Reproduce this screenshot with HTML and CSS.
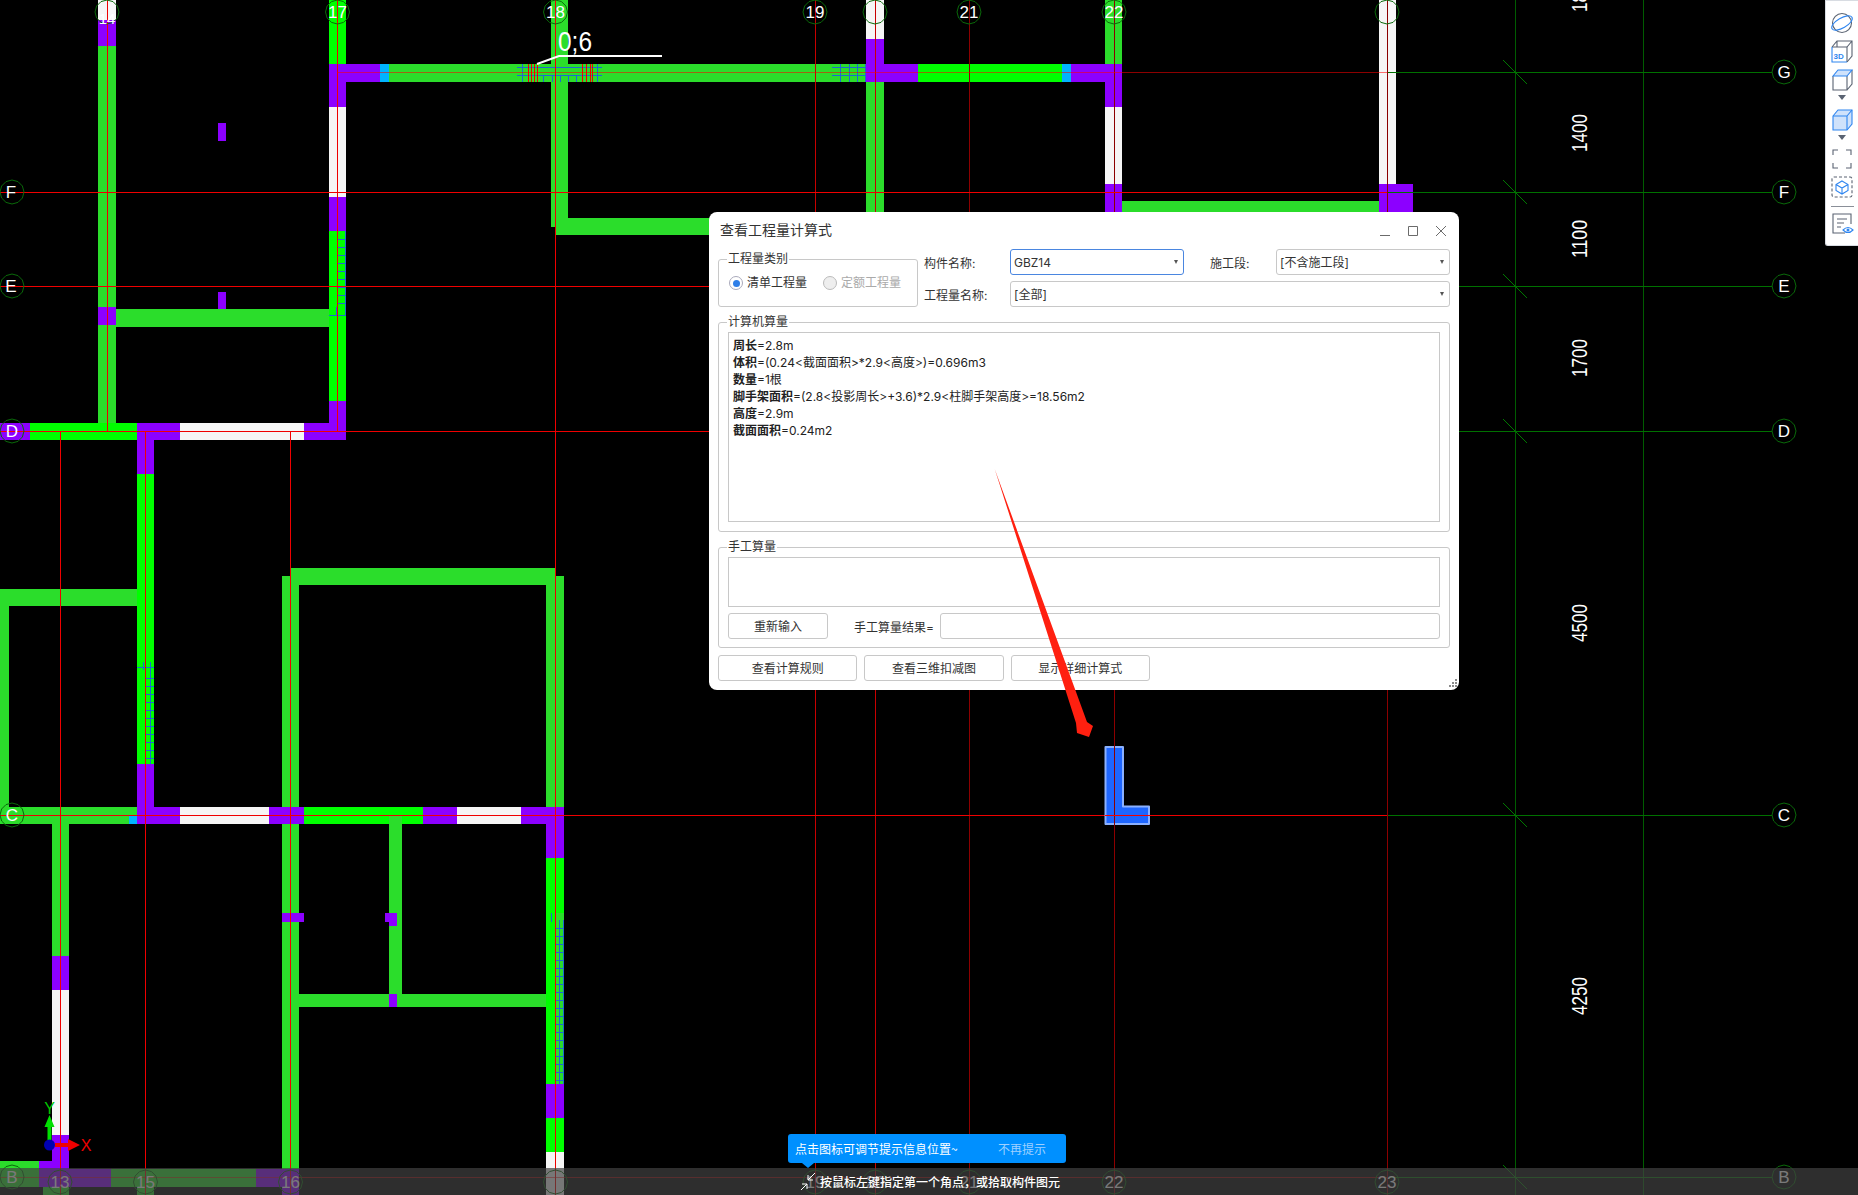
FILE: index.html
```html
<!DOCTYPE html>
<html lang="zh-CN">
<head>
<meta charset="utf-8">
<title>查看工程量计算式</title>
<link rel="stylesheet" href="styles.css">
</head>
<body>
<div class="app">
  <svg class="canvas" width="1858" height="1195" viewBox="0 0 1858 1195">
    <defs>
      <polygon id="b" points="0,-12 6,-10.4 10.4,-6 12,0 10.4,6 6,10.4 0,12 -6,10.4 -10.4,6 -12,0 -10.4,-6 -6,-10.4"/>
    </defs>
    <g class="walls">
      <!-- axis 14 -->
      <rect class="t" x="98" y="0" width="18" height="20"/>
      <rect class="p" x="98" y="20" width="18" height="26"/>
      <rect class="w" x="98" y="46" width="18" height="377"/>
      <rect class="p" x="98" y="307" width="18" height="18"/>
      <rect class="w" x="116" y="309" width="213" height="18"/>
      <rect class="p" x="218" y="123" width="8" height="18"/>
      <rect class="p" x="218" y="292" width="8" height="17"/>
      <!-- axis 17 -->
      <rect class="g" x="329" y="0" width="17" height="64"/>
      <rect class="p" x="329" y="64" width="17" height="43"/>
      <rect class="t" x="329" y="107" width="17" height="90"/>
      <rect class="p" x="329" y="197" width="17" height="34"/>
      <rect class="g" x="329" y="231" width="17" height="170"/>
      <rect class="p" x="329" y="401" width="17" height="39"/>
      <!-- beam G -->
      <rect class="p" x="329" y="64" width="51" height="18"/>
      <rect class="c" x="380" y="64" width="9" height="18"/>
      <rect class="w" x="389" y="64" width="477" height="18"/>
      <rect class="g" x="918" y="64" width="144" height="18"/>
      <rect class="c" x="1062" y="64" width="9" height="18"/>
      <rect class="p" x="1071" y="64" width="51" height="18"/>
      <!-- axis 18 -->
      <rect class="w" x="551" y="0" width="17" height="227"/>
      <rect class="w" x="555" y="218" width="170" height="17"/>
      <rect class="w" x="555" y="200" width="13" height="20"/>
      <!-- axis 20 -->
      <rect class="t" x="866" y="0" width="18" height="39"/>
      <rect class="w" x="866" y="82" width="18" height="140"/>
      <rect class="p" x="866" y="39" width="18" height="43"/>
      <rect class="p" x="866" y="64" width="52" height="18"/>
      <!-- axis 22 -->
      <rect class="w" x="1105" y="0" width="17" height="64"/>
      <rect class="p" x="1105" y="64" width="17" height="43"/>
      <rect class="t" x="1105" y="107" width="17" height="77"/>
      <rect class="p" x="1105" y="184" width="17" height="36"/>
      <rect class="w" x="1122" y="201" width="257" height="20"/>
      <!-- axis 23 -->
      <rect class="t" x="1379" y="0" width="17" height="184"/>
      <rect class="p" x="1379" y="184" width="34" height="36"/>
      <!-- row D -->
      <rect class="p" x="0" y="423" width="30" height="17"/>
      <rect class="g" x="30" y="423" width="107" height="17"/>
      <rect class="w" x="98" y="400" width="18" height="23"/>
      <rect class="p" x="137" y="423" width="43" height="17"/>
      <rect class="t" x="180" y="423" width="124" height="17"/>
      <rect class="p" x="304" y="423" width="42" height="17"/>
      <rect class="p" x="137" y="440" width="17" height="34"/>
      <rect class="g" x="137" y="474" width="17" height="290"/>
      <rect class="p" x="137" y="764" width="17" height="43"/>
      <!-- left room -->
      <rect class="w" x="0" y="589" width="137" height="17"/>
      <rect class="w" x="0" y="606" width="9" height="201"/>
      <!-- upper box -->
      <rect class="w" x="282" y="576" width="17" height="231"/>
      <rect class="w" x="290" y="568" width="265" height="17"/>
      <rect class="w" x="546" y="576" width="18" height="231"/>
      <!-- row C -->
      <rect class="w" x="0" y="807" width="129" height="17"/>
      <rect class="w" x="129" y="807" width="8" height="9"/>
      <rect class="c" x="129" y="816" width="8" height="8"/>
      <rect class="p" x="137" y="807" width="43" height="17"/>
      <rect class="t" x="180" y="807" width="89" height="17"/>
      <rect class="p" x="269" y="807" width="35" height="17"/>
      <rect class="g" x="304" y="807" width="119" height="17"/>
      <rect class="p" x="423" y="807" width="34" height="17"/>
      <rect class="t" x="457" y="807" width="64" height="17"/>
      <rect class="p" x="521" y="807" width="43" height="17"/>
      <!-- below C -->
      <rect class="w" x="52" y="824" width="17" height="132"/>
      <rect class="p" x="52" y="956" width="17" height="34"/>
      <rect class="t" x="52" y="990" width="17" height="145"/>
      <rect class="p" x="52" y="1135" width="17" height="33"/>
      <rect class="w" x="282" y="824" width="17" height="371"/>
      <rect class="p" x="282" y="913" width="22" height="9"/>
      <rect class="w" x="389" y="816" width="13" height="178"/>
      <rect class="p" x="385" y="913" width="12" height="9"/>
      <rect class="p" x="389" y="922" width="8" height="4"/>
      <rect class="w" x="299" y="994" width="248" height="13"/>
      <rect class="p" x="389" y="994" width="8" height="13"/>
      <rect class="p" x="546" y="824" width="18" height="34"/>
      <rect class="g" x="546" y="858" width="18" height="226"/>
      <rect class="w" x="555" y="913" width="9" height="171"/>
      <rect class="p" x="546" y="1084" width="18" height="34"/>
      <rect class="g" x="546" y="1118" width="18" height="34"/>
      <rect class="t" x="546" y="1152" width="18" height="43"/>
      <!-- row B -->
      <rect class="w" x="0" y="1161" width="39" height="26"/>
      <rect class="p" x="39" y="1161" width="30" height="26"/>
      <rect class="p" x="39" y="1169" width="72" height="18"/>
      <rect class="w" x="111" y="1169" width="145" height="18"/>
      <rect class="p" x="256" y="1169" width="43" height="18"/>
      <rect class="w" x="43" y="1187" width="26" height="8"/>
      <rect class="w" x="137" y="1187" width="17" height="8"/>
      <rect class="p" x="282" y="1187" width="17" height="8"/>
    </g>
    <path class="hatch" d="M517 67H602M517 75H602M543 75V82M552 75V82M560 75V82M568 75V82M576 75V82M522 64V82M597 64V82
      M832 67H866M832 75H866M840 64V82M849 64V82M857 64V82M865 64V82
      M345 231V315M337 239H346M337 247H346M337 255H346M337 263H346M337 271H346M337 279H346M337 287H346M337 295H346M337 303H346M329 315H346M336 307V315
      M150 662V764M146 678H154M146 686H154M146 694H154M146 702H154M146 710H154M146 718H154M146 726H154M146 734H154M146 742H154M146 750H154M146 758H154M137 667H154M143 662V670
      M559 920V1084M563 920V1084M555 928H564M555 936H564M555 944H564M555 952H564M555 960H564M555 968H564M555 976H564M555 984H564M555 992H564M555 1000H564M555 1008H564M555 1016H564M555 1024H564M555 1032H564M555 1040H564M555 1048H564M555 1056H564M555 1064H564M555 1072H564M555 1080H564M551 913V922"/>
    <path class="rebar" d="M528 64V82M531 64V82M534 64V82M537 64V82M582 64V82M586 64V82M590 64V82M592 64V82"/>
    <!-- grid lines -->
    <path class="ln-green" d="M1515.5 0V1195M1643.5 0V1195"/>
    <path class="ln-dgreen" d="M1387 72.5H1772M1387 192.5H1772M1459 286.5H1772M1459 431.5H1772M1387 815.5H1772M1387 1177.5H1772"/>
    <path class="ln-tick" d="M1503 60L1527 84M1503 180L1527 204M1503 274L1527 298M1503 419L1527 443M1503 803L1527 827M1503 1165L1527 1189"/>
    <path class="ln-red" d="M107.5 0V431M337.5 0V431M555.5 0V1195M60.5 431V1195M145.5 431V1195M290.5 431V1195"/>
    <path class="ln-mid" d="M815.5 0V1195M875.5 0V1195"/>
    <path class="ln-dark" d="M969.5 0V1195M1114.5 0V1195M1387.5 0V1195"/>
    <path class="ln-red" d="M0 192.5H1387M0 286.5H709M0 431.5H709M0 815.5H1387"/>
    <path class="ln-dim" d="M337 72.5H1387M0 1177.5H1387"/>
    <!-- bubbles -->
    <g class="bubbles">
      <use href="#b" x="107" y="12"/><use href="#b" x="337.5" y="12"/><use href="#b" x="555.5" y="12"/><use href="#b" x="815" y="12"/><use href="#b" x="875" y="12"/><use href="#b" x="969" y="12"/><use href="#b" x="1114" y="12"/><use href="#b" x="1387" y="12"/>
      <use href="#b" x="12" y="192"/><use href="#b" x="12" y="286"/><use href="#b" x="12" y="431"/><use href="#b" x="12" y="815"/><use href="#b" x="12" y="1177"/>
      <use href="#b" x="1784" y="72"/><use href="#b" x="1784" y="192"/><use href="#b" x="1784" y="286"/><use href="#b" x="1784" y="431"/><use href="#b" x="1784" y="815"/><use href="#b" x="1784" y="1177"/>
      <use href="#b" x="60" y="1182"/><use href="#b" x="145.5" y="1182"/><use href="#b" x="290.5" y="1182"/><use href="#b" x="555.5" y="1182"/><use href="#b" x="815" y="1182"/><use href="#b" x="875" y="1182"/><use href="#b" x="969" y="1182"/><use href="#b" x="1114" y="1182"/><use href="#b" x="1387" y="1182"/>
    </g>
    <g class="lbl">
      <text x="107" y="24" class="lbl-small">14</text><text x="337.5" y="18">17</text><text x="555.5" y="18">18</text><text x="815" y="18">19</text><text x="969" y="18">21</text><text x="1114" y="18">22</text>
      <text x="11" y="198">F</text><text x="11" y="292">E</text><text x="12" y="437">D</text><text x="12" y="821">C</text><text x="12" y="1183">B</text>
      <text x="1784" y="78">G</text><text x="1784" y="198">F</text><text x="1784" y="292">E</text><text x="1784" y="437">D</text><text x="1784" y="821">C</text><text x="1784" y="1183">B</text>
      <text x="60" y="1188">13</text><text x="145.5" y="1188">15</text><text x="290.5" y="1188">16</text><text x="815" y="1188">19</text><text x="875" y="1188">20</text><text x="969" y="1188">21</text><text x="1114" y="1188">22</text><text x="1387" y="1188">23</text>
    </g>
    <!-- dimensions -->
    <g class="dim">
      <text transform="translate(1587 12) rotate(-90)" textLength="38" lengthAdjust="spacingAndGlyphs">1800</text>
      <text transform="translate(1587 152) rotate(-90)" textLength="38" lengthAdjust="spacingAndGlyphs">1400</text>
      <text transform="translate(1587 258) rotate(-90)" textLength="38" lengthAdjust="spacingAndGlyphs">1100</text>
      <text transform="translate(1587 377) rotate(-90)" textLength="38" lengthAdjust="spacingAndGlyphs">1700</text>
      <text transform="translate(1587 642) rotate(-90)" textLength="38" lengthAdjust="spacingAndGlyphs">4500</text>
      <text transform="translate(1587 1015) rotate(-90)" textLength="38" lengthAdjust="spacingAndGlyphs">4250</text>
    </g>
    <!-- leader -->
    <path class="leader" d="M537 64L559 56H662"/>
    <text class="leader-text" x="558" y="51" textLength="34" lengthAdjust="spacingAndGlyphs">0;6</text>
    <!-- selected column -->
    <path class="column" d="M1105.5 747H1123V806.5H1149V824H1105.5Z"/>
    <path class="ln-dark" d="M1114.5 746V825"/>
    <path class="ln-red" d="M1105 815.5H1150"/>
    <!-- axes -->
    <path class="ax-y" d="M47.5 1140V1127H44.5L49.5 1115L54.5 1127H51.5V1140Z"/>
    <path class="ax-x" d="M55 1143H68V1139L80 1145L68 1151V1147H55Z"/>
    <circle class="ax-o" cx="49.5" cy="1145" r="5.5"/>
    <text class="ax-yt" x="49.5" y="1114">Y</text>
    <text class="ax-xt" x="86" y="1151">X</text>
  </svg>

  <div class="toolbar">
    <svg class="tb-icon" viewBox="0 0 24 24"><circle class="s-gray" cx="12" cy="12" r="9.5"/><ellipse class="s-blue" cx="12" cy="12" rx="11.5" ry="5" transform="rotate(-30 12 12)"/></svg>
    <svg class="tb-icon" viewBox="0 0 24 24"><path class="s-gray" d="M2 8L7 2H22V17L17 23M17 8L22 2M7 8V2"/><path class="s-gray" d="M2 8H17V23"/><path class="s-blue" d="M2 8V23H17"/><text class="tb-3d" x="3.5" y="20">3D</text></svg>
    <svg class="tb-icon" viewBox="0 0 24 24"><path class="s-gray" d="M3 9V23H17V9M17 23L22 17V3"/><path class="s-blue f-light" d="M3 9L8 3H22L17 9Z"/></svg>
    <span class="tb-arrow"></span>
    <svg class="tb-icon" viewBox="0 0 24 24"><path class="s-blue f-light" d="M3 9L8 3H22V17L17 23H3Z"/><path class="s-blue" d="M3 9H17V23M17 9L22 3"/></svg>
    <span class="tb-arrow"></span>
    <svg class="tb-icon" viewBox="0 0 24 24"><path class="s-gray" d="M3 8V3H8M16 3H21V8M21 16V21H16M8 21H3V16"/></svg>
    <svg class="tb-icon" viewBox="0 0 24 24"><rect class="s-gray s-dash" x="2" y="2" width="20" height="20" rx="2"/><path class="s-blue" d="M12 6L18 9.5V15.5L12 19L6 15.5V9.5ZM6 9.5L12 13L18 9.5M12 13V19"/></svg>
    <span class="tb-divider"></span>
    <svg class="tb-icon" viewBox="0 0 24 24"><path class="s-gray" d="M15 22H3V3H21V13M7 8H17M7 12H14M7 16H11"/><path class="s-blue" d="M13 19Q18 14 23 19Q18 24 13 19Z"/><circle class="dot-blue" cx="18" cy="19" r="1.5"/></svg>
  </div>

  <section class="dialog">
    <header class="titlebar">
      <span class="title">查看工程量计算式</span>
      <div class="winbtns">
        <svg class="winbtn" viewBox="0 0 12 12"><path d="M1 10.5H11"/></svg>
        <svg class="winbtn" viewBox="0 0 12 12"><path d="M1.5 1.5H10.5V10.5H1.5Z"/></svg>
        <svg class="winbtn" viewBox="0 0 12 12"><path d="M1 1L11 11M11 1L1 11"/></svg>
      </div>
    </header>
    <div class="top">
      <div class="group group-type">
        <span class="group-title">工程量类别</span>
        <label class="radio"><span class="dot dot-on"></span>清单工程量</label>
        <label class="radio radio-off"><span class="dot"></span>定额工程量</label>
      </div>
      <div class="fields">
        <span class="lab">构件名称:</span>
        <div class="combo combo-focus">GBZ14</div>
        <span class="lab lab-indent">施工段:</span>
        <div class="combo">[不含施工段]</div>
        <span class="lab">工程量名称:</span>
        <div class="combo combo-wide">[全部]</div>
      </div>
    </div>
    <div class="group group-calc">
      <span class="group-title">计算机算量</span>
      <div class="box box-calc">
        <p><b>周长</b>=2.8m</p>
        <p><b>体积</b>=(0.24&lt;截面面积&gt;*2.9&lt;高度&gt;)=0.696m3</p>
        <p><b>数量</b>=1根</p>
        <p><b>脚手架面积</b>=(2.8&lt;投影周长&gt;+3.6)*2.9&lt;柱脚手架高度&gt;=18.56m2</p>
        <p><b>高度</b>=2.9m</p>
        <p><b>截面面积</b>=0.24m2</p>
      </div>
    </div>
    <div class="group group-manual">
      <span class="group-title">手工算量</span>
      <div class="box box-manual"></div>
      <div class="manual-row">
        <button class="btn" type="button">重新输入</button>
        <span class="lab lab-indent">手工算量结果=</span>
        <div class="input"></div>
      </div>
    </div>
    <div class="actions">
      <button class="btn btn-act" type="button">查看计算规则</button>
      <button class="btn btn-act" type="button">查看三维扣减图</button>
      <button class="btn btn-act" type="button">显示详细计算式</button>
    </div>
    <svg class="grip" viewBox="0 0 8 8"><path d="M6 0h2v2H6zM3 3h2v2H3zM6 3h2v2H6zM0 6h2v2H0zM3 6h2v2H3zM6 6h2v2H6z"/></svg>
  </section>

  <svg class="overlay" width="1858" height="1195" viewBox="0 0 1858 1195">
    <polygon class="red-arrow" points="994.7,469 1087,722 1093,726 1089,737 1077,733 1076,723"/>
  </svg>

  <div class="statusbar">
    <svg class="st-icon" viewBox="0 0 16 18"><path d="M15 0L8 7M8 2V7H13M1 17L7 11M2 11H7V16"/></svg>
    <span class="st-text">按鼠标左键指定第一个角点，或拾取构件图元</span>
  </div>
  <div class="tip">
    <span>点击图标可调节提示信息位置~</span>
    <span class="tip-off">不再提示</span>
  </div>
</div>
</body>
</html>
```

FILE: styles.css
```css
* { box-sizing: border-box; }
html, body { margin: 0; padding: 0; background: #000; }
body { font-family: "Noto Sans CJK SC", "Noto Sans", sans-serif; font-size: 12px; color: #333; overflow: hidden; }
.app { position: relative; width: 1858px; height: 1195px; overflow: hidden; background: #000; }

/* CAD canvas */
.canvas { position: absolute; left: 0; top: 0; display: block; }
.canvas rect, .canvas path { shape-rendering: crispEdges; }
.w { fill: #2bdd2b; }
.g { fill: #00ff00; }
.p { fill: #8c00ff; }
.t { fill: #f6f6f6; }
.c { fill: #00b4ff; }
.hatch { fill: none; stroke: #1c6ad0; stroke-width: 1; }
.rebar { fill: none; stroke: #f00000; stroke-width: 1; }
.ln-red { fill: none; stroke: #f00000; stroke-width: 1; }
.ln-mid { fill: none; stroke: #c80000; stroke-width: 1; }
.ln-dark { fill: none; stroke: #8c0000; stroke-width: 1; }
.ln-dim { fill: none; stroke: #ff0000; stroke-opacity: .55; stroke-width: 1; }
.ln-green { fill: none; stroke: #005c00; stroke-width: 1; }
.ln-dgreen { fill: none; stroke: #007000; stroke-width: 1; }
.canvas .ln-tick { fill: none; stroke: #007800; stroke-width: 1; shape-rendering: auto; }
.bubbles { fill: none; stroke: #0a6a0a; stroke-width: 1; }
.lbl { fill: #fff; font-family: "Liberation Sans", sans-serif; font-size: 17px; text-anchor: middle; }
.lbl-small { font-size: 15px; }
.dim { fill: #fff; font-family: "Liberation Sans", sans-serif; font-size: 22px; }
.canvas .leader { fill: none; stroke: #fff; stroke-width: 2; shape-rendering: auto; }
.leader-text { fill: #fff; font-family: "Liberation Sans", sans-serif; font-size: 28px; }
.canvas .column { fill: #1e66ff; stroke: #8ab0ff; stroke-width: 2; stroke-linejoin: round; shape-rendering: auto; }
.ax-y { fill: #00e000; }
.ax-x { fill: #f00000; }
.canvas .ax-y, .canvas .ax-x { shape-rendering: auto; }
.ax-o { fill: #0000b4; }
.ax-yt { fill: #00c800; font-family: "Liberation Sans", sans-serif; font-size: 16px; text-anchor: middle; }
.ax-xt { fill: #f00000; font-family: "Liberation Sans", sans-serif; font-size: 16px; text-anchor: middle; }

/* right toolbar */
.toolbar { position: absolute; right: 0; top: 0; width: 33px; height: 246px; background: #fff; border: 1px solid #d8dce2; border-right: 0; border-radius: 0 0 0 3px; display: flex; flex-direction: column; align-items: center; gap: 4px; padding-top: 10px; }
.tb-icon { width: 24px; height: 24px; flex: none; display: block; }
.s-gray { fill: none; stroke: #5a6372; stroke-width: 1.1; }
.s-blue { fill: none; stroke: #2f86f0; stroke-width: 1.1; }
.s-dash { stroke-dasharray: 3 2; }
.f-light { fill: #cfe2fb; }
.dot-blue { fill: #2f86f0; }
.tb-3d { fill: #2f86f0; font-family: "Liberation Sans", sans-serif; font-size: 8px; font-weight: 700; }
.tb-arrow { flex: none; width: 0; height: 8px; margin: 0; border-left: 4px solid transparent; border-right: 4px solid transparent; border-top: 5px solid #5a6372; border-bottom: 3px solid transparent; }
.tb-divider { flex: none; width: 23px; height: 1px; margin-top: 3px; background: #8a8f98; }

/* dialog */
.dialog { position: absolute; left: 709px; top: 212px; width: 750px; height: 478px; padding: 0 9px 9px 9px; background: #fff; border-radius: 8px; font-family: "Inter", "Noto Sans CJK SC", sans-serif; }
.titlebar { height: 37px; display: flex; align-items: center; justify-content: space-between; padding-left: 2px; }
.title { font-size: 14px; color: #333; line-height: 20px; margin-top: -1px; }
.winbtns { display: flex; gap: 16px; padding-right: 3px; }
.winbtn { width: 12px; height: 12px; fill: none; stroke: #6b6b6b; stroke-width: 1; display: block; }
.top { display: grid; grid-template-columns: 200px 526px; column-gap: 6px; }
.group { position: relative; border: 1px solid #c8c8c8; border-radius: 3px; }
.group-title { position: absolute; left: 8px; top: -9px; padding: 0 1px; background: #fff; line-height: 16px; color: #333; }
.group-type { height: 48px; margin-top: 10px; display: flex; align-items: flex-start; gap: 16px; padding: 14px 0 0 10px; }
.radio { display: flex; align-items: center; gap: 4px; line-height: 18px; color: #333; }
.radio-off { color: #aaa; }
.dot { width: 14px; height: 14px; border-radius: 50%; border: 1px solid #bbb; background: #eee; display: flex; align-items: center; justify-content: center; }
.dot-on { background: #fff; border-color: #aab; }
.dot-on::after { content: ""; width: 7px; height: 7px; border-radius: 50%; background: #2f7fe8; }
.fields { display: grid; grid-template-columns: 86px 174px 92px 174px; grid-auto-rows: 26px; row-gap: 6px; align-items: center; }
.lab { color: #333; white-space: nowrap; }
.lab-indent { padding-left: 26px; }
.combo { position: relative; height: 26px; line-height: 26px; padding-left: 3px; border: 1px solid #c8c8c8; border-radius: 3px; color: #333; }
.combo::after { content: ""; position: absolute; right: 5px; top: 10px; border-left: 2.5px solid transparent; border-right: 2.5px solid transparent; border-top: 4px solid #555; }
.combo-focus { border-color: #4a86e0; }
.combo-wide { grid-column: span 3; }
.group-calc { margin-top: 15px; height: 210px; padding: 9px 9px 9px 9px; }
.box { border: 1px solid #c8c8c8; background: #fff; }
.box-calc { height: 190px; padding: 4px; }
.box-calc p { margin: 0; line-height: 17px; white-space: nowrap; color: #222; }
.box-calc b { font-weight: 700; }
.group-manual { margin-top: 15px; height: 101px; padding: 9px 9px 8px 9px; display: flex; flex-direction: column; gap: 6px; }
.box-manual { height: 50px; }
.manual-row { display: grid; grid-template-columns: 100px 112px 1fr; align-items: center; height: 26px; }
.btn { height: 26px; padding: 0 0 2px; border: 1px solid #c8c8c8; border-radius: 3px; background: #fff; color: #333; font: inherit; }
.input { height: 26px; border: 1px solid #c8c8c8; border-radius: 3px; }
.actions { display: flex; gap: 7px; margin-top: 7px; }
.btn-act { width: 139.33px; }
.grip { position: absolute; right: 2px; bottom: 3px; width: 8px; height: 8px; fill: #8a8a8a; }

.overlay { position: absolute; left: 0; top: 0; display: block; pointer-events: none; }
.red-arrow { fill: #ff2010; }

/* status */
.statusbar { position: absolute; left: 0; right: 0; bottom: 0; height: 27px; padding-left: 800px; display: flex; align-items: center; gap: 4px; background: rgba(66, 66, 66, .7); }
.st-icon { width: 16px; height: 18px; fill: none; stroke: #fff; stroke-width: 1; flex: none; }
.st-text { color: #fff; font-weight: 500; line-height: 16px; }
.tip { position: absolute; left: 788px; top: 1134px; width: 278px; height: 29px; padding: 0 20px 0 7px; background: #0090ff; border-radius: 3px; display: flex; align-items: center; justify-content: space-between; color: #fff; }
.tip::after { content: ""; position: absolute; left: 14px; top: 29px; border-left: 6px solid transparent; border-right: 6px solid transparent; border-top: 5px solid #0090ff; }
.tip-off { color: #9fd0ff; }
```
